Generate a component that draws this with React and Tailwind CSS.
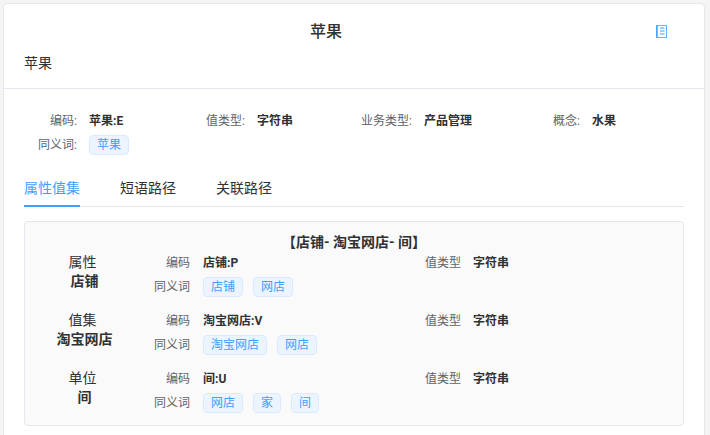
const FONT = 'font-["Roboto","Noto_Sans_CJK_SC",sans-serif]';

function Tag({ children }) {
  return (
    <span className="flex h-5 items-center rounded-[4px] border border-[#d9ecff] bg-[#ecf5ff] px-[7px] text-xs leading-none text-[#409eff]">
      {children}
    </span>
  );
}

function Info({ label, value }) {
  return (
    <div className="flex h-4 items-center">
      <span className="w-[63px] shrink-0 text-right text-xs text-[#606266]">{label}</span>
      <span className="ml-3 text-xs font-bold text-[#303133]">{value}</span>
    </div>
  );
}

function Row({ kind, name, code, tags }) {
  return (
    <div className="flex h-[58px]">
      <div className="flex w-[119px] shrink-0 flex-col items-center pt-[1px]">
        <span className="h-[19px] pr-1 text-center text-sm leading-[19px] text-[#303133]">{kind}</span>
        <span className="h-[19px] text-center text-sm font-bold leading-[19px] text-[#303133]">{name}</span>
      </div>
      <div className="flex flex-col">
        <div className="flex h-[22px] items-center">
          <span className="w-[46px] shrink-0 text-right text-xs text-[#606266]">编码</span>
          <span className="ml-[13px] w-[222px] shrink-0 text-xs font-bold text-[#303133]">{code}</span>
          <span className="w-[36px] shrink-0 text-xs text-[#606266]">值类型</span>
          <span className="ml-3 text-xs font-bold text-[#303133]">字符串</span>
        </div>
        <div className="mt-[3px] flex items-center">
          <span className="w-[46px] shrink-0 text-right text-xs text-[#606266]">同义词</span>
          <div className="ml-[13px] flex gap-[10px]">
            {tags.map((t) => (
              <Tag key={t}>{t}</Tag>
            ))}
          </div>
        </div>
      </div>
    </div>
  );
}

export default function App() {
  return (
    <div className={`${FONT} h-[435px] w-[710px] overflow-hidden bg-[#f5f5f5] pl-[3px] pr-[5px] pt-[3px]`}>
      <div className="h-[440px] rounded-t-[4px] border border-[#e8e8e8] bg-white">
        <div className="h-[85px] border-b border-[#e4e7ed]">
          <div className="relative flex h-[49px] items-center pl-[306px] pt-[6px]">
            <span className="text-base font-medium text-[#303133]">苹果</span>
            <svg className="absolute left-[652px] top-[21px]" width="12" height="13" viewBox="0 0 12 13" fill="none">
              <rect x="0.5" y="0.5" width="10" height="12" stroke="#66b1ff" />
              <path d="M1 0.5V12.5" stroke="#409eff" strokeWidth="1.4" />
              <path d="M4 3H8.5M4 6H8.5M4 9H8.5" stroke="#409eff" strokeWidth="1" />
            </svg>
          </div>
          <div className="pl-5 text-sm leading-5 text-[#303133]">苹果</div>
        </div>
        <div className="pl-[10px] pt-[24px]">
          <div className="grid grid-cols-[168px_167px_168px_168px]">
            <Info label="编码:" value="苹果:E" />
            <Info label="值类型:" value="字符串" />
            <Info label="业务类型:" value="产品管理" />
            <Info label="概念:" value="水果" />
          </div>
          <div className="mt-[6px] flex items-center">
            <span className="w-[63px] text-right text-xs text-[#606266]">同义词:</span>
            <div className="ml-3 flex"><Tag>苹果</Tag></div>
          </div>
        </div>
        <div className="mx-5 mt-[14px] flex h-[38px] gap-10 border-b border-[#e4e7ed] text-sm">
          <span className="h-[38px] border-b-2 border-[#409eff] pt-[9px] leading-5 text-[#409eff]">属性值集</span>
          <span className="pt-[9px] leading-5 text-[#303133]">短语路径</span>
          <span className="pt-[9px] leading-5 text-[#303133]">关联路径</span>
        </div>
        <div className="mx-5 mt-[14px] h-[205px] rounded-[4px] border border-[#e4e7ed] bg-[#fafafa]">
          <div className="h-[28px] pt-[11px] text-center text-sm font-bold leading-[18px] text-[#303133]">【店铺- 淘宝网店- 间】</div>
          <div className="pt-[2px]">
            <Row kind="属性" name="店铺" code="店铺:P" tags={["店铺", "网店"]} />
            <Row kind="值集" name="淘宝网店" code="淘宝网店:V" tags={["淘宝网店", "网店"]} />
            <Row kind="单位" name="间" code="间:U" tags={["网店", "家", "间"]} />
          </div>
        </div>
      </div>
    </div>
  );
}
